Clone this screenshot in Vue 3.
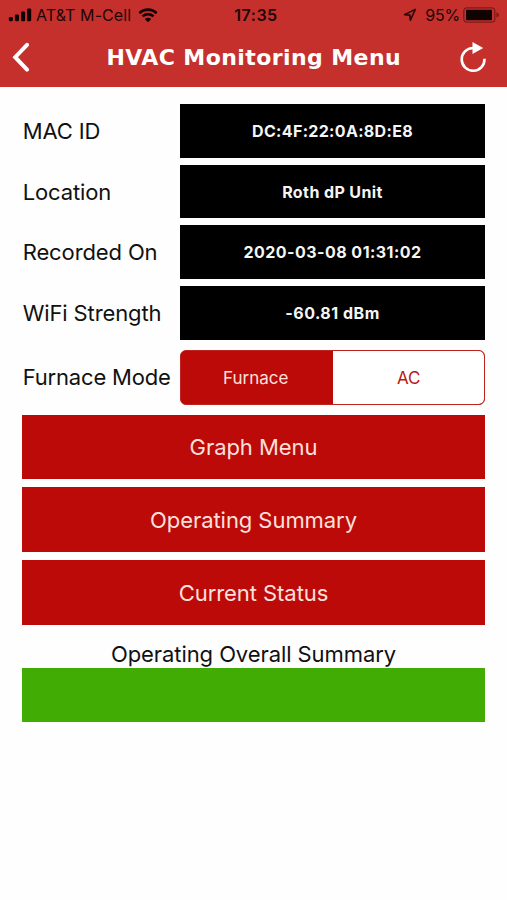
<script setup>
import { ref } from 'vue'

const readings = [
  { label: 'MAC ID', value: 'DC:4F:22:0A:8D:E8', kind: 'mac' },
  { label: 'Location', value: 'Roth dP Unit', kind: 'unit' },
  { label: 'Recorded On', value: '2020-03-08 01:31:02', kind: 'recorded' },
  { label: 'WiFi Strength', value: '-60.81 dBm', kind: 'strength' },
]
const modes = ['Furnace', 'AC']
const mode = ref('Furnace')
const actions = ['Graph Menu', 'Operating Summary', 'Current Status']
</script>

<template>
  <div class="screen">
    <header class="header">
      <div class="status">
        <div class="status-left">
          <svg class="signal" width="24" height="14" viewBox="0 0 24 14">
            <rect x="0.8" y="9" width="4.1" height="4.2" rx="1.2" />
            <rect x="6.9" y="6.6" width="4.1" height="6.6" rx="1.2" />
            <rect x="13" y="3.6" width="4.1" height="9.6" rx="1.2" />
            <rect x="19.1" y="0.4" width="4.1" height="12.8" rx="1.2" />
          </svg>
          <span class="carrier">AT&amp;T M-Cell</span>
          <svg class="wifi" width="20" height="15" viewBox="0 0 20 15">
            <path d="M1.4 5.2 A12.3 12.3 0 0 1 18.6 5.2" />
            <path d="M4.5 8.4 A7.9 7.9 0 0 1 15.5 8.4" />
            <path class="wifi-dot" d="M10 14.2 L6.8 11 A4.5 4.5 0 0 1 13.2 11 Z" />
          </svg>
        </div>
        <span class="clock">17:35</span>
        <div class="status-right">
          <svg class="location" width="14" height="14" viewBox="0 0 14 14">
            <path d="M12.3 1.4 L1.6 6.6 L6.9 7.1 L7.3 12.3 Z" />
          </svg>
          <span class="percent">95%</span>
          <svg class="battery" width="37" height="16" viewBox="0 0 37 16">
            <rect class="battery-case" x="0.8" y="0.8" width="31" height="14.4" rx="3.2" />
            <rect x="3" y="2.8" width="26" height="10.4" rx="1" />
            <path class="battery-tip" d="M33.3 5.6 Q36 6 36 8 Q36 10 33.3 10.4 Z" />
          </svg>
        </div>
      </div>
      <div class="nav">
        <svg class="back" width="18" height="30" viewBox="0 0 18 30">
          <path d="M16 2.8 L4.2 15.2 L16 27.6" />
        </svg>
        <h1 class="title">HVAC Monitoring Menu</h1>
        <svg class="reload" width="28" height="32" viewBox="0 0 28 32">
          <path class="reload-arc" d="M25.5 17.8 A11.4 11.4 0 1 1 14.1 7" />
          <path class="reload-head" d="M13.5 1 L24.2 6.9 L13.5 12.9 Z" />
        </svg>
      </div>
    </header>

    <main class="content">
      <div class="readings">
        <div v-for="r in readings" :key="r.label" class="row">
          <span class="label">{{ r.label }}</span>
          <div class="value" :class="r.kind">{{ r.value }}</div>
        </div>
      </div>

      <div class="row mode-row">
        <span class="label">Furnace Mode</span>
        <div class="segments">
          <button
            v-for="m in modes"
            :key="m"
            class="segment"
            :class="{ active: m === mode }"
            @click="mode = m"
          >{{ m }}</button>
        </div>
      </div>

      <div class="actions">
        <button v-for="a in actions" :key="a" class="action">{{ a }}</button>
      </div>

      <h2 class="overall-title">Operating Overall Summary</h2>
      <div class="overall-bar"></div>
    </main>
  </div>
</template>

<style>
body {
  background: #fff;
}
</style>

<style scoped>
.screen {
  width: 507px;
  height: 900px;
  overflow: hidden;
  background: #fefefe;
  font-family: Inter, "Liberation Sans", sans-serif;
  color: #111;
}
.header {
  height: 87px;
  background: #c5302d;
  box-sizing: border-box;
}
.status {
  height: 30px;
  display: grid;
  grid-template-columns: 1fr auto 1fr;
  align-items: center;
  padding: 0 7px 0 8px;
  font-size: 16px;
  line-height: 30px;
  color: #1c0505;
  fill: #120303;
}
.status-left,
.status-right {
  display: flex;
  align-items: center;
}
.status-right {
  justify-content: flex-end;
}
.carrier {
  margin-left: 4px;
  letter-spacing: 0.08px;
  white-space: nowrap;
}
.wifi {
  margin-left: 7px;
  fill: none;
  stroke: #120303;
  stroke-width: 2.7;
}
.wifi-dot {
  fill: #120303;
  stroke: none;
}
.clock {
  font-weight: 600;
  letter-spacing: 0.5px;
  padding-left: 4px;
}
.location {
  fill: none;
  stroke: #2a0606;
  stroke-width: 1.6;
  stroke-linejoin: round;
}
.percent {
  margin: 0 3px 0 8px;
  letter-spacing: -0.2px;
}
.battery-case {
  fill: none;
  stroke: #7c1c1a;
  stroke-width: 1.3;
}
.battery-tip {
  fill: #7c1c1a;
}
.nav {
  height: 57px;
  display: grid;
  grid-template-columns: 40px 1fr 40px;
  align-items: center;
  padding: 0 8px 3px 11px;
  box-sizing: border-box;
}
.back {
  fill: none;
  stroke: #fff;
  stroke-width: 4;
  stroke-linecap: round;
  stroke-linejoin: miter;
}
.title {
  margin: 0;
  padding-top: 2px;
  font-family: "DejaVu Sans", sans-serif;
  font-weight: 700;
  font-size: 22px;
  line-height: 30px;
  letter-spacing: 0.42px;
  color: #fff;
  text-align: center;
  text-indent: -2.5px;
  white-space: nowrap;
}
.reload-arc {
  fill: none;
  stroke: #fff;
  stroke-width: 2.6;
}
.reload-head {
  fill: #fff;
}
.content {
  padding: 17px 22px 0;
}
.readings {
  display: grid;
  row-gap: 6.7px;
}
.row {
  display: grid;
  grid-template-columns: 158px 305px;
  align-items: center;
}
.label {
  padding-left: 0.7px;
  font-size: 22px;
  line-height: 28px;
  letter-spacing: -0.12px;
  white-space: nowrap;
}
.value {
  height: 53.9px;
  display: flex;
  align-items: center;
  justify-content: center;
  background: #000;
  color: #f5f5f5;
  font-size: 16px;
  font-weight: 700;
  white-space: nowrap;
}
.mac {
  letter-spacing: 0.33px;
}
.unit {
  letter-spacing: 0.4px;
}
.recorded {
  letter-spacing: 0.47px;
}
.strength {
  letter-spacing: 0.5px;
}
.mode-row {
  margin-top: 10px;
}
.mode-row .label {
  padding-bottom: 1px;
  letter-spacing: -0.18px;
}
.segments {
  height: 55px;
  box-sizing: border-box;
  display: grid;
  grid-template-columns: 1fr 1fr;
  border: 1.5px solid #bd2220;
  border-radius: 6px;
  overflow: hidden;
  background: #bb0a07;
}
.segment {
  border: 0;
  padding: 1px 0 0;
  margin: 0;
  background: #fff;
  color: #bd1815;
  font: 400 17px/20px Inter, "Liberation Sans", sans-serif;
}
.segment:last-child {
  padding-left: 1px;
  border-radius: 0 5px 5px 0;
}
.segment.active {
  padding-right: 2px;
  background: #bb0a07;
  color: #fde0dc;
}
.actions {
  margin-top: 10px;
  display: grid;
  row-gap: 8.5px;
}
.action {
  height: 64.3px;
  border: 0;
  padding: 0;
  background: #bb0a07;
  color: #fde0dc;
  font: 400 22px/28px Inter, "Liberation Sans", sans-serif;
  letter-spacing: -0.06px;
}
.action:last-child {
  padding-top: 1px;
}
.overall-title {
  margin: 15.2px 0 0;
  font-size: 22px;
  font-weight: 400;
  line-height: 28px;
  letter-spacing: -0.08px;
  text-align: center;
  white-space: nowrap;
}
.overall-bar {
  height: 54px;
  background: #40ac04;
}
</style>
